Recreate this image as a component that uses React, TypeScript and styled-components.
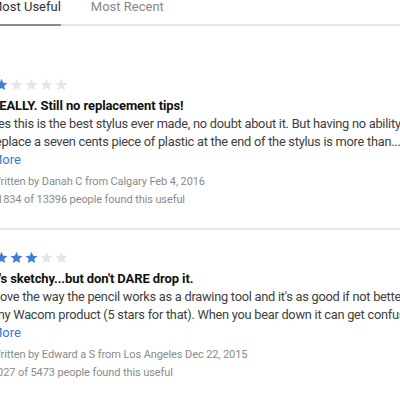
import styled, { createGlobalStyle } from "styled-components";

const GlobalStyle = createGlobalStyle`
  html, body {
    margin: 0;
    padding: 0;
    background: #fff;
    overflow: hidden;
  }
  body {
    font-family: Roboto, "Helvetica Neue", Arial, sans-serif;
    -webkit-font-smoothing: antialiased;
  }
`;

const Page = styled.div`
  width: 430px;
  margin-left: -9px;
  margin-top: -1px;
`;

const TabBar = styled.div`
  display: flex;
  gap: 30px;
  border-bottom: 2px solid #e6e6e6;
  margin-bottom: 31px;
`;

const Tab = styled.div<{ active?: boolean }>`
  font-size: 13px;
  line-height: 16px;
  padding-bottom: 9px;
  margin-bottom: -2px;
  color: ${({ active }) => (active ? "#333" : "#888")};
  border-bottom: 2px solid ${({ active }) => (active ? "#8a8a8a" : "transparent")};
`;

const Review = styled.div`
  padding: 21px 0 19px;
  border-bottom: 2px solid #e8e8e8;
`;

const Stars = styled.div`
  display: flex;
  gap: 2px;
  height: 13px;
  margin: 0 0 6px 4px;
`;

const Star = styled.svg<{ filled: boolean }>`
  width: 13px;
  height: 13px;
  fill: ${({ filled }) => (filled ? "#3d7fd8" : "#e6e6e6")};
`;

const Title = styled.div`
  font-size: 13px;
  font-weight: 700;
  line-height: 18px;
  color: #111;
  letter-spacing: -0.1px;
  white-space: nowrap;
`;

const Body = styled.div`
  font-size: 12.8px;
  line-height: 18px;
  color: #404040;
  letter-spacing: -0.25px;
  white-space: nowrap;
`;

const More = styled.a`
  display: block;
  font-size: 13px;
  line-height: 18px;
  color: #2f7bd6;
`;

const Meta = styled.div`
  margin-top: 4px;
  font-size: 11px;
  line-height: 18px;
  letter-spacing: -0.1px;
  color: #8a8a8a;
  white-space: nowrap;
`;

const StarIcon = ({ filled }: { filled: boolean }) => (
  <Star filled={filled} viewBox="0 0 24 24">
    <path d="M12 1.5l3.1 7.2 7.9.7-6 5.2 1.8 7.7L12 18.3l-6.8 4 1.8-7.7-6-5.2 7.9-.7z" />
  </Star>
);

const reviews = [
  {
    rating: 1,
    title: "REALLY. Still no replacement tips!",
    lines: [
      "Yes this is the best stylus ever made, no doubt about it. But having no ability to",
      "replace a seven cents piece of plastic at the end of the stylus is more than...",
    ],
    author: "Written by Danah C from Calgary Feb 4, 2016",
    useful: "11834 of 13396 people found this useful",
  },
  {
    rating: 3,
    title: "It's sketchy...but don't DARE drop it.",
    lines: [
      "I love the way the pencil works as a drawing tool and it's as good if not better than",
      "any Wacom product (5 stars for that). When you bear down it can get confused...",
    ],
    author: "Written by Edward a S from Los Angeles Dec 22, 2015",
    useful: "5027 of 5473 people found this useful",
  },
];

export default function App() {
  return (
    <>
      <GlobalStyle />
      <Page>
        <TabBar>
          <Tab active>Most Useful</Tab>
          <Tab>Most Recent</Tab>
        </TabBar>
        {reviews.map((r) => (
          <Review key={r.author}>
            <Stars>
              {[1, 2, 3, 4, 5].map((n) => (
                <StarIcon key={n} filled={n <= r.rating} />
              ))}
            </Stars>
            <Title>{r.title}</Title>
            <Body>
              {r.lines.map((l) => (
                <div key={l}>{l}</div>
              ))}
            </Body>
            <More>More</More>
            <Meta>
              <div>{r.author}</div>
              <div>{r.useful}</div>
            </Meta>
          </Review>
        ))}
      </Page>
    </>
  );
}
